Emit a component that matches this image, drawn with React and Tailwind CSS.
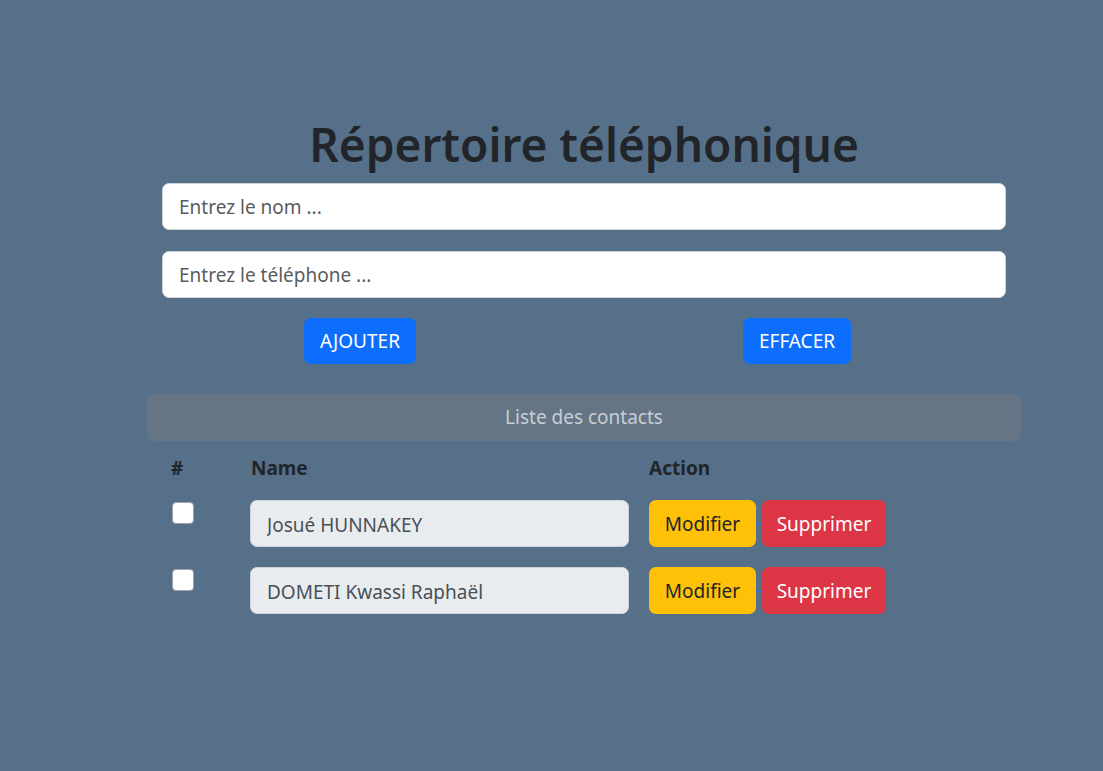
import { useState } from 'react'

// Phone directory: add/clear form + list of contacts with edit/delete actions.
const initial = [
  { id: 1, name: 'Josué HUNNAKEY' },
  { id: 2, name: 'DOMETI Kwassi Raphaël' },
]

export default function App() {
  const [contacts] = useState(initial)

  return (
    <div
      className="min-h-screen w-full bg-[#557088] text-[#212529]"
      style={{ fontFamily: '"Noto Sans", "Open Sans", sans-serif' }}
    >
      <div className="ml-[147px] w-[874px] pt-[105px]">
        <h1 className="text-center text-[46px] font-semibold leading-[78px] text-[#212529]">
          Répertoire téléphonique
        </h1>

        <div className="mx-[15px] flex flex-col gap-[21px]">
          <input
            placeholder="Entrez le nom ..."
            className="h-[47px] w-full rounded-[7px] border border-[#ced4da] bg-white px-4 text-[19px] text-[#212529] outline-none placeholder:text-[#595c5f]"
          />
          <input
            placeholder="Entrez le téléphone ..."
            className="h-[47px] w-full rounded-[7px] border border-[#ced4da] bg-white px-4 text-[19px] text-[#212529] outline-none placeholder:text-[#595c5f]"
          />
        </div>

        <div className="mt-[20px] flex h-[46px] items-center">
          <button className="ml-[157px] h-[46px] rounded-[7px] bg-[#0d6efd] px-4 text-[19px] text-white">
            AJOUTER
          </button>
          <button className="ml-[327px] h-[46px] rounded-[7px] bg-[#0d6efd] px-4 text-[19px] text-white">
            EFFACER
          </button>
        </div>

        <div className="mt-[30px] flex h-[47px] items-center justify-center rounded-[7px] bg-[#657583] text-[19px] text-[#c6cfd7]">
          Liste des contacts
        </div>

        <table className="mt-[5px] w-full border-collapse text-left">
          <thead>
            <tr className="h-[44px] text-[19px] font-bold">
              <th className="w-[103px] pl-[24px] font-bold">#</th>
              <th className="w-[398px] pl-[1px] font-bold">Name</th>
              <th className="font-bold">Action</th>
            </tr>
          </thead>
          <tbody>
            {contacts.map((c) => (
              <tr key={c.id} className="h-[67px] align-top">
                <td className="pl-[25px] pt-[12px]">
                  <input type="checkbox" className="block h-[22px] w-[22px] appearance-none rounded-[4px] border border-[#9ca3af] bg-white" />
                </td>
                <td className="pt-[10px] pr-[20px]">
                  <input
                    value={c.name}
                    disabled
                    readOnly
                    className="h-[47px] w-[379px] rounded-[7px] border border-[#ced4da] bg-[#e9ecef] px-4 pt-[2px] text-[19px] text-[#495057]"
                  />
                </td>
                <td className="pt-[10px]">
                  <div className="flex items-center">
                    <button className="h-[47px] w-[107px] rounded-[7px] bg-[#ffc107] pt-[2px] text-[19px] text-[#212529]">
                      Modifier
                    </button>
                    <span className="mt-[2px] h-[1px] w-[6px] bg-[#0d6efd]" />
                    <button className="h-[47px] w-[124px] rounded-[7px] bg-[#dc3545] pt-[2px] text-[19px] text-white">
                      Supprimer
                    </button>
                  </div>
                </td>
              </tr>
            ))}
          </tbody>
        </table>
      </div>
    </div>
  )
}
